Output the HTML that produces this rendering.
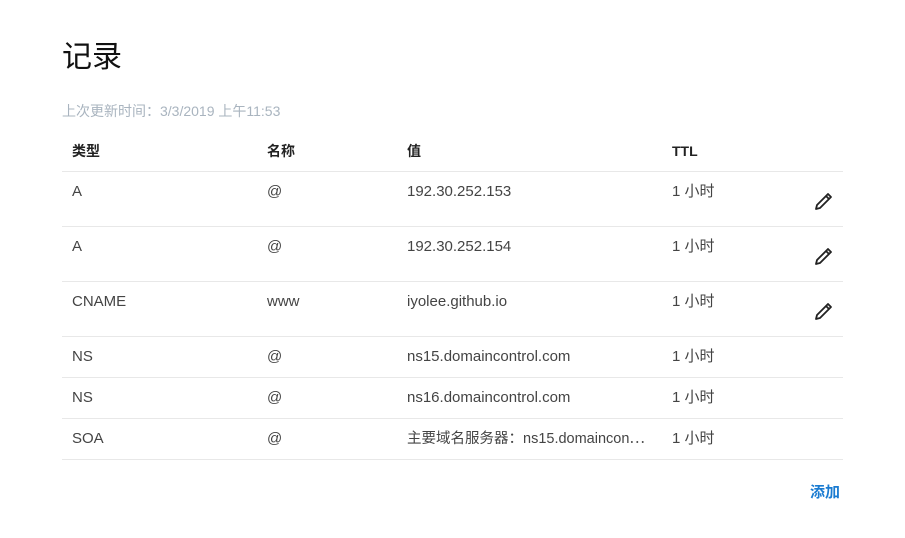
<!DOCTYPE html>
<html><head><meta charset="utf-8"><style>
*{margin:0;padding:0;box-sizing:border-box}
body{width:905px;height:538px;background:#fff;font-family:"Liberation Sans","Noto Sans CJK SC",sans-serif;color:#333;position:relative;overflow:hidden}
.a{position:absolute;white-space:nowrap;line-height:18px}
.t{font-size:15px;color:#444}
.h{font-size:14px;font-weight:bold;color:#222}
.line{position:absolute;left:62px;width:781px;height:1px;background:#e8e8e8}
svg{position:absolute}
</style></head><body>
<div class="a" style="left:62px;top:38px;font-size:30px;color:#111;line-height:40px">记录</div>
<div class="a" style="left:62px;top:102px;font-size:14px;color:#a9b4bf">上次更新时间：3/3/2019 上午11:53</div>
<div class="a h" style="left:72px;top:142px">类型</div>
<div class="a h" style="left:267px;top:142px">名称</div>
<div class="a h" style="left:407px;top:142px">值</div>
<div class="a h" style="left:672px;top:142px">TTL</div>
<div class="line" style="top:171px"></div>
<div class="a t" style="left:72px;top:183px">A</div><div class="a t" style="left:267px;top:183px">@</div><div class="a t" style="left:407px;top:183px">192.30.252.153</div><div class="a t" style="left:672px;top:183px">1 小时</div>
<div class="line" style="top:226px"></div>
<div class="a t" style="left:72px;top:238px">A</div><div class="a t" style="left:267px;top:238px">@</div><div class="a t" style="left:407px;top:238px">192.30.252.154</div><div class="a t" style="left:672px;top:238px">1 小时</div>
<div class="line" style="top:281px"></div>
<div class="a t" style="left:72px;top:293px">CNAME</div><div class="a t" style="left:267px;top:293px">www</div><div class="a t" style="left:407px;top:293px">iyolee.github.io</div><div class="a t" style="left:672px;top:293px">1 小时</div>
<div class="line" style="top:336px"></div>
<div class="a t" style="left:72px;top:348px">NS</div><div class="a t" style="left:267px;top:348px">@</div><div class="a t" style="left:407px;top:348px">ns15.domaincontrol.com</div><div class="a t" style="left:672px;top:348px">1 小时</div>
<div class="line" style="top:377px"></div>
<div class="a t" style="left:72px;top:389px">NS</div><div class="a t" style="left:267px;top:389px">@</div><div class="a t" style="left:407px;top:389px">ns16.domaincontrol.com</div><div class="a t" style="left:672px;top:389px">1 小时</div>
<div class="line" style="top:418px"></div>
<div class="a t" style="left:72px;top:430px">SOA</div><div class="a t" style="left:267px;top:430px">@</div><div class="a t" style="left:407px;top:430px;font-size:14.5px">主要域名服务器：ns15.domaincon⋯</div><div class="a t" style="left:672px;top:430px">1 小时</div>
<div class="line" style="top:459px"></div>
<div class="a" style="left:810px;top:484px;font-size:15px;font-weight:bold;color:#1a7bd1">添加</div>
<svg style="left:813px;top:190px" width="22" height="22" viewBox="0 0 22 22"><path d="M3 19 L4 15 L15 4 L18 7 L7 18 Z M13 6 L16 9" fill="none" stroke="#222" stroke-width="1.8" stroke-linejoin="round"/></svg>
<svg style="left:813px;top:245px" width="22" height="22" viewBox="0 0 22 22"><path d="M3 19 L4 15 L15 4 L18 7 L7 18 Z M13 6 L16 9" fill="none" stroke="#222" stroke-width="1.8" stroke-linejoin="round"/></svg>
<svg style="left:813px;top:300px" width="22" height="22" viewBox="0 0 22 22"><path d="M3 19 L4 15 L15 4 L18 7 L7 18 Z M13 6 L16 9" fill="none" stroke="#222" stroke-width="1.8" stroke-linejoin="round"/></svg>
</body></html>
